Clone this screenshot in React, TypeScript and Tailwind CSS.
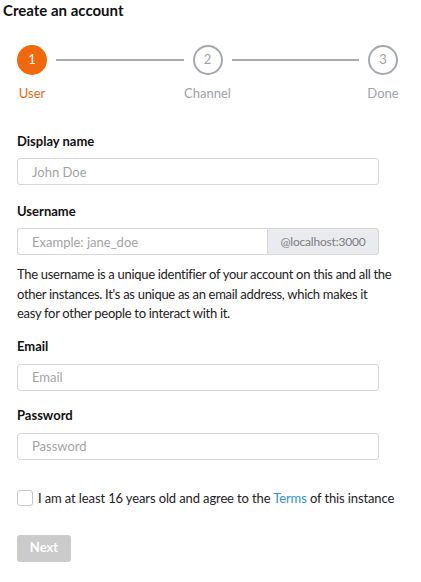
import React, { useState } from 'react';

const steps = [
  { n: 1, label: 'User', active: true },
  { n: 2, label: 'Channel', active: false },
  { n: 3, label: 'Done', active: false },
];

const Stepper: React.FC = () => (
  <div className="flex items-start">
    {steps.map((s, i) => (
      <React.Fragment key={s.n}>
        {i > 0 && <div className="mx-[9px] mt-[14px] h-[2px] flex-1 bg-[#a7abb1]" />}
        <div className="flex w-[30px] flex-col items-center">
          <div
            className={
              s.active
                ? 'flex h-[30px] w-[30px] items-center justify-center rounded-full bg-[#f2690d] text-[13px] text-white'
                : 'flex h-[30px] w-[30px] items-center justify-center rounded-full border-2 border-[#a4a8ae] text-[13px] text-[#9ea2a8]'
            }
          >
            {s.n}
          </div>
          <div
            className={
              'mt-[10px] whitespace-nowrap text-[13px] leading-[16px] ' +
              (s.active ? 'text-[#f2690d]' : 'text-[#9ea2a8]')
            }
          >
            {s.label}
          </div>
        </div>
      </React.Fragment>
    ))}
  </div>
);

const Label: React.FC<{ children: React.ReactNode; className?: string }> = ({ children, className }) => (
  <label className={'block text-[13px] font-bold leading-[18px] text-[#111] ' + (className ?? '')}>{children}</label>
);

const inputCls =
  'h-[27px] w-[362px] rounded-[3px] border border-[#d6d6d6] bg-white px-[14px] text-[13px] text-[#222] outline-none placeholder:text-[#a3a3a3]';

export default function App() {
  const [agree, setAgree] = useState(false);

  return (
    <div className="min-h-[582px] bg-white text-[#212121]" style={{ fontFamily: 'Lato, "Open Sans", sans-serif' }}>
      <h1 className="px-[3px] text-[15px] font-bold leading-[20px] text-[#111]">Create an account</h1>

      <div className="mt-[25px] pl-[17px] pr-[23px]">
        <Stepper />
      </div>

      <form className="pl-[17px] pr-[8px]" onSubmit={(e) => e.preventDefault()}>
        <Label className="mt-[31px] mb-[8px]">Display name</Label>
        <input className={inputCls} placeholder="John Doe" />

        <Label className="mt-[17px] mb-[8px]">Username</Label>
        <div className="flex w-[362px]">
          <input
            className="h-[27px] flex-1 rounded-l-[3px] border border-r-0 border-[#d6d6d6] bg-white px-[14px] text-[13px] outline-none placeholder:text-[#a3a3a3]"
            placeholder="Example: jane_doe"
          />
          <span className="flex h-[27px] w-[112px] items-center justify-center rounded-r-[3px] border border-[#d6d6d6] bg-[#e9ebee] text-[12px] tracking-[-0.2px] text-[#7a7d82]">
            @localhost:3000
          </span>
        </div>
        <p className="mt-[10px] w-[376px] text-[13px] leading-[19.5px] tracking-[-0.3px] text-[#222]">
          The username is a unique identifier of your account on this and all the other instances. It's as unique as
          an email address, which makes it easy for other people to interact with it.
        </p>

        <Label className="mt-[13px] mb-[9px]">Email</Label>
        <input className={inputCls} placeholder="Email" type="email" />

        <Label className="mt-[15px] mb-[9px]">Password</Label>
        <input className={inputCls} placeholder="Password" type="password" />

        <label className="mt-[29px] flex items-center gap-[5px] whitespace-nowrap text-[13px] leading-[18px] tracking-[-0.12px] text-[#222]">
          <span
            onClick={() => setAgree(!agree)}
            className="h-[16px] w-[16px] shrink-0 rounded-[3px] border border-[#c8c8c8] bg-white"
          />
          <span>
            I am at least 16 years old and agree to the <a className="text-[#2c8fe0]">Terms</a> of this instance
          </span>
        </label>

        <button
          type="submit"
          disabled={!agree}
          className="mt-[28px] h-[27px] w-[54px] rounded-[3px] bg-[#cbcbcb] text-[13px] font-bold text-white"
        >
          Next
        </button>
      </form>
    </div>
  );
}
